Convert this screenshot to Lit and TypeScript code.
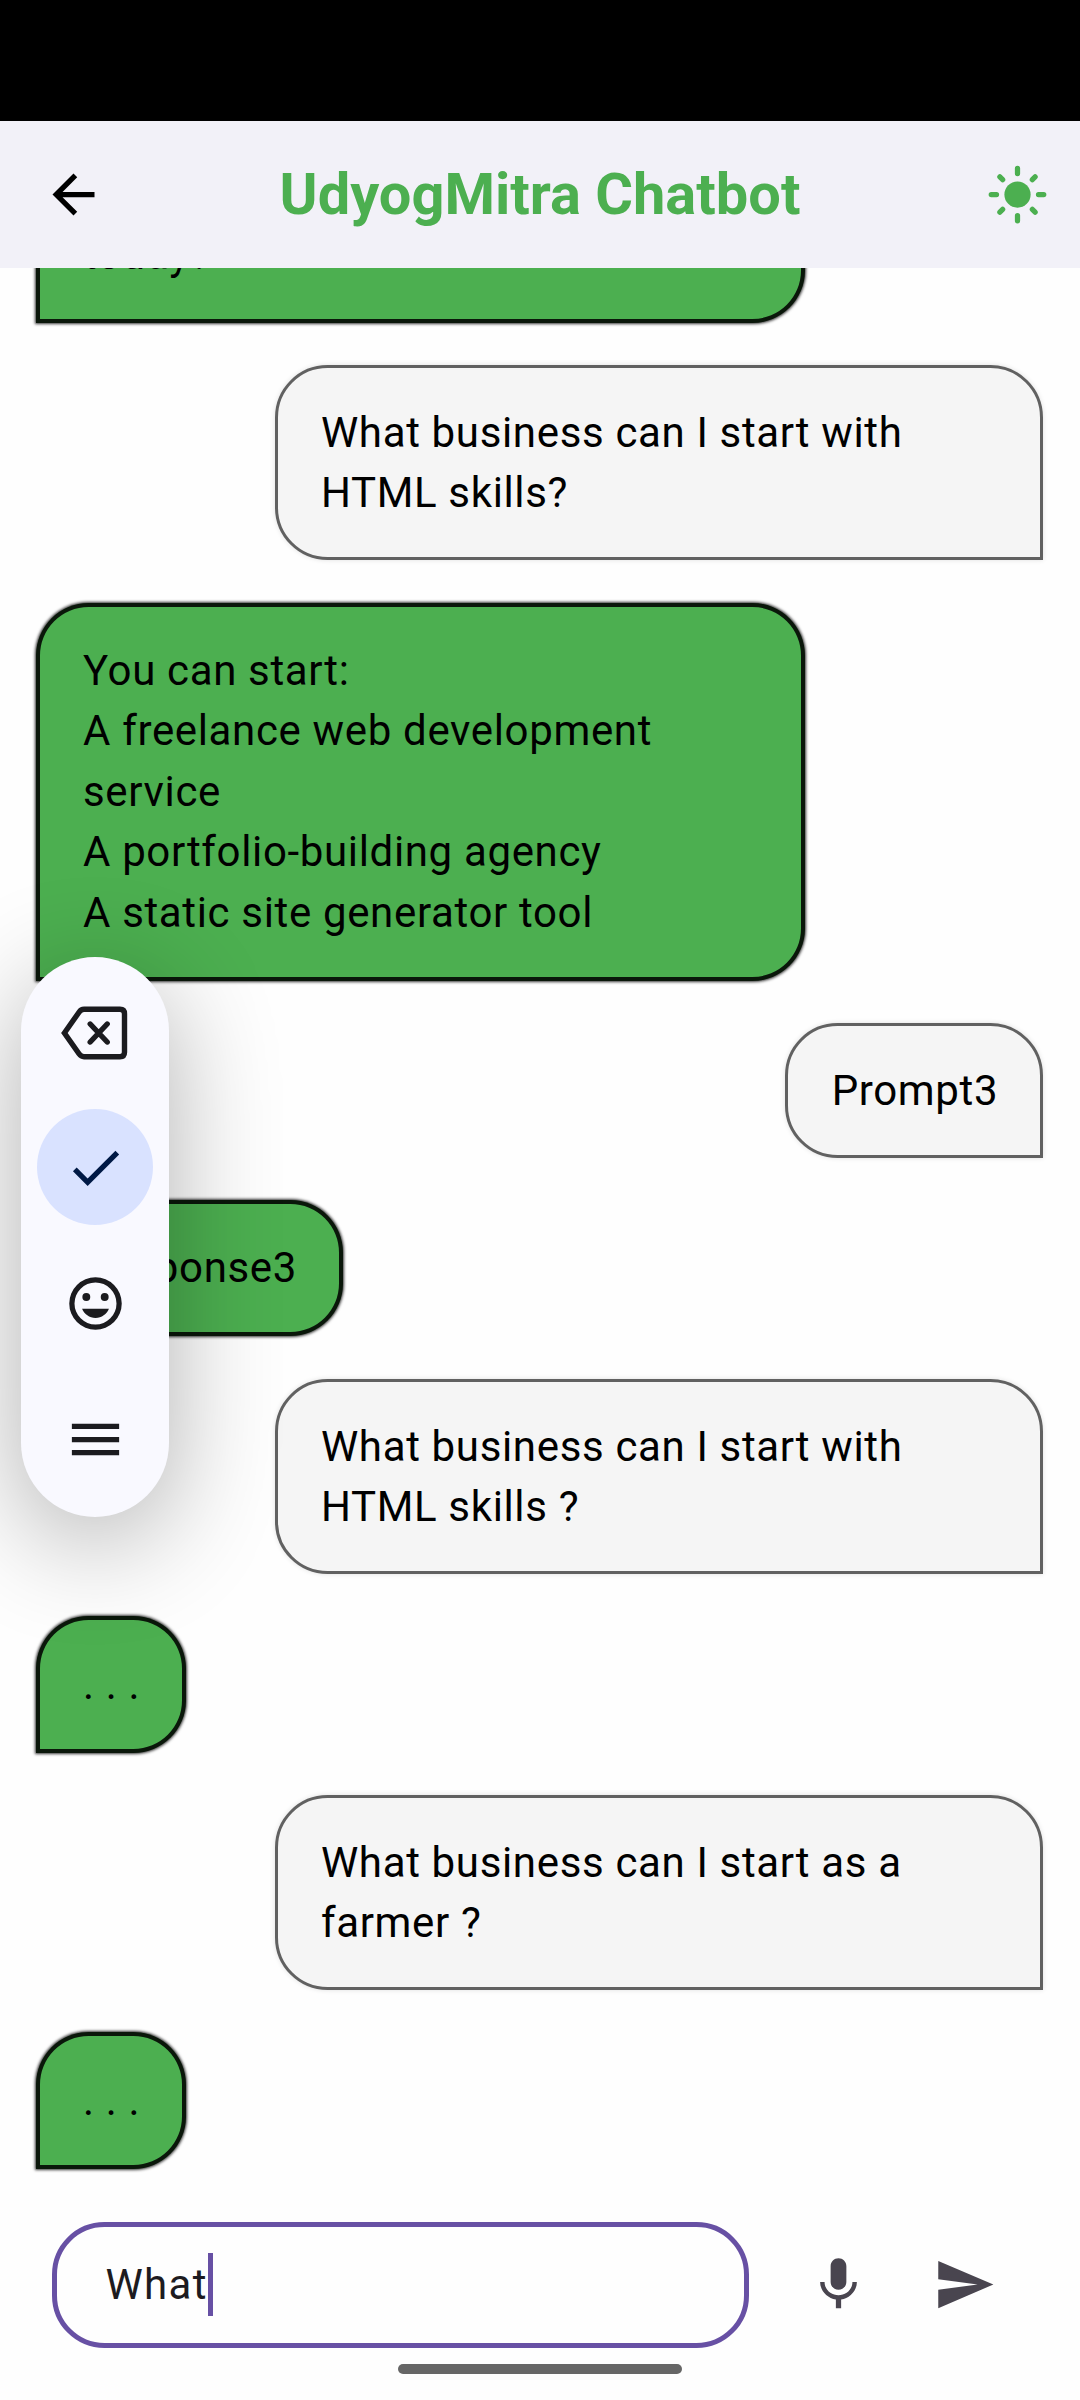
import { LitElement, html, css, svg } from "lit";
import { customElement, property } from "lit/decorators.js";

interface Message {
  from: "user" | "bot";
  lines: string[];
  full?: boolean;
}

const MESSAGES: Message[] = [
  { from: "bot", lines: ["today?"], full: true },
  { from: "user", lines: ["What business can I start with", "HTML skills?"], full: true },
  {
    from: "bot",
    lines: [
      "You can start:",
      "A freelance web development",
      "service",
      "A portfolio-building agency",
      "A static site generator tool",
    ],
    full: true,
  },
  { from: "user", lines: ["Prompt3"] },
  { from: "bot", lines: ["Response3"] },
  { from: "user", lines: ["What business can I start with", "HTML skills ?"], full: true },
  { from: "bot", lines: [". . ."] },
  { from: "user", lines: ["What business can I start as a", "farmer ?"], full: true },
  { from: "bot", lines: [". . ."] },
];

const GLYPHS: Record<string, unknown> = {
  back: svg`<path d="M20 11H7.83l5.59-5.59L12 4l-8 8 8 8 1.41-1.41L7.83 13H20v-2z"/>`,
  sun: svg`<circle cx="12" cy="12" r="5"/>
    <path fill="none" stroke="currentColor" stroke-width="2" stroke-linecap="round"
      d="M2 12h2M20 12h2M12 2v2M12 20v2M5.285 5.285l1.06 1.06M17.655 17.655l1.06 1.06M18.715 5.285l-1.06 1.06M6.345 17.655l-1.06 1.06"/>`,
  check: svg`<path d="M9 16.17L4.83 12l-1.42 1.41L9 19 21 7l-1.41-1.41z"/>`,
  smile: svg`<path fill-rule="evenodd" d="M12 2a10 10 0 1 0 0 20a10 10 0 1 0 0-20zM12 4a8 8 0 1 1 0 16a8 8 0 1 1 0-16z"/>
    <circle cx="8.5" cy="9.5" r="1.5"/><circle cx="15.5" cy="9.5" r="1.5"/>
    <path d="M12 17.5c2.33 0 4.31-1.46 5.11-3.5H6.89c.8 2.04 2.78 3.5 5.11 3.5z"/>`,
  menu: svg`<path d="M3 18h18v-2H3v2zm0-5h18v-2H3v2zm0-7v2h18V6H3z"/>`,
  mic: svg`<path d="M12 14c1.66 0 2.99-1.34 2.99-3L15 5c0-1.66-1.34-3-3-3S9 3.34 9 5v6c0 1.66 1.34 3 3 3zm5.3-3c0 3-2.54 5.1-5.3 5.1S6.7 14 6.7 11H5c0 3.41 2.72 6.23 6 6.72V21h2v-3.28c3.28-.48 6-3.3 6-6.72h-1.7z"/>`,
  send: svg`<path d="M2.01 21L23 12 2.01 3 2 10l15 2-15 2z"/>`,
};

@customElement("ui-icon")
class UiIcon extends LitElement {
  @property() name = "";

  static styles = css`
    :host {
      display: block;
      flex: none;
      width: 63px;
      height: 63px;
    }
    .glyph {
      display: block;
      width: 100%;
      height: 100%;
      fill: currentColor;
      overflow: visible;
    }
  `;

  render() {
    return html`<svg class="glyph" viewBox="0 0 24 24">${GLYPHS[this.name]}</svg>`;
  }
}

@customElement("chat-bubble")
class ChatBubble extends LitElement {
  @property({ attribute: false }) message!: Message;

  static styles = css`
    :host {
      display: flex;
      flex: none;
    }
    .bubble {
      box-sizing: border-box;
      font-size: 42px;
      line-height: 60.375px;
      letter-spacing: 0.656px;
      color: #000;
      white-space: pre;
    }
    .full {
      width: 768.5px;
    }
    .bot {
      margin-right: auto;
      padding: 34.5px 42px 33.7px 43px;
      border: 4px solid rgba(0, 0, 0, 0.87);
      border-radius: 52.5px 52.5px 52.5px 0;
      background: #4caf50;
      box-shadow: 0 0 3px 1px rgba(0, 0, 0, 0.8);
    }
    .user {
      margin-left: auto;
      padding: 34.9px 42px 33.7px 43.2px;
      border: 3px solid #616161;
      border-radius: 52.5px 52.5px 0 52.5px;
      background: #f5f5f5;
      box-shadow: 0 0 5px rgba(0, 0, 0, 0.12);
    }
  `;

  render() {
    const { from, full, lines } = this.message;
    return html`<div class="bubble ${from} ${full ? "full" : ""}">${lines.map((line) => html`<div>${line}</div>`)}</div>`;
  }
}

@customElement("input-toolbar")
class InputToolbar extends LitElement {
  static styles = css`
    :host {
      box-sizing: border-box;
      display: flex;
      flex-direction: column;
      gap: 20px;
      width: 148px;
      height: 559.5px;
      padding: 16px;
      border-radius: 74px;
      background: #f9f9ff;
      color: #1b1b1f;
      box-shadow: 0 24px 110px rgba(0, 0, 0, 0.31);
    }
    .cell {
      display: flex;
      flex: none;
      align-items: center;
      justify-content: center;
      width: 116px;
      height: 116px;
      border-radius: 50%;
    }
    .selected {
      background: #d9e2ff;
      color: #001945;
    }
    .backspace {
      width: 68px;
      height: 54px;
      margin: 4px 2px 0 0;
      fill: none;
      stroke: currentColor;
      stroke-width: 5.4;
    }
  `;

  render() {
    return html`
      <div class="cell">
        <svg class="backspace" viewBox="0 0 68 54">
          <path d="M4.4 27L19 6.2Q21 3.3 24 3.3H60Q64.5 3.3 64.5 7.8V46.2Q64.5 50.7 60 50.7H24Q21 50.7 19 47.8Z" />
          <path stroke-linecap="round" d="M30.2 18L47.2 36M47.2 18L30.2 36" />
        </svg>
      </div>
      <div class="cell selected"><ui-icon name="check"></ui-icon></div>
      <div class="cell"><ui-icon name="smile"></ui-icon></div>
      <div class="cell"><ui-icon name="menu"></ui-icon></div>
    `;
  }
}

@customElement("app-root")
class AppRoot extends LitElement {
  static styles = css`
    :host {
      position: relative;
      display: flex;
      flex-direction: column;
      width: 1080px;
      height: 2400px;
      overflow: hidden;
      background: #fefefe;
      font-family: Roboto, "Liberation Sans", sans-serif;
    }
    .status {
      flex: none;
      height: 121px;
      background: #000;
    }
    .header {
      box-sizing: border-box;
      display: flex;
      flex: none;
      align-items: center;
      justify-content: space-between;
      height: 147px;
      padding: 0 31.5px 0 42px;
      background: #f2f1f8;
    }
    .title {
      padding: 0 10.5px 1px 0;
      font-size: 57.75px;
      font-weight: 700;
      line-height: 73px;
      white-space: nowrap;
      color: #4caf50;
    }
    .sun {
      color: #4caf50;
    }
    .list {
      box-sizing: border-box;
      display: flex;
      flex: 1;
      flex-direction: column;
      justify-content: flex-end;
      gap: 42.2px;
      min-height: 0;
      padding: 0 36.75px 21px 36px;
      overflow: hidden;
    }
    .composer {
      box-sizing: border-box;
      display: flex;
      flex: none;
      align-items: center;
      height: 158px;
      padding: 32px 84px 0 52px;
    }
    .field {
      box-sizing: border-box;
      display: flex;
      align-items: center;
      width: 697px;
      height: 126px;
      padding: 0 0 2px 48.5px;
      border: 5px solid #6750a4;
      border-radius: 52.5px;
      font-size: 42px;
      line-height: 63px;
      letter-spacing: 1.3125px;
      color: #1d1b20;
    }
    .caret {
      width: 5px;
      height: 63px;
      background: #6750a4;
    }
    .actions {
      display: flex;
      flex: 1;
      justify-content: space-between;
      padding: 0 0 1.5px 58px;
      color: #49454f;
    }
    .nav {
      display: flex;
      flex: none;
      justify-content: center;
      height: 52px;
      padding-top: 16px;
      box-sizing: border-box;
    }
    .handle {
      width: 284px;
      height: 10px;
      border-radius: 5px;
      background: #666;
    }
    .floating {
      position: absolute;
      left: 21px;
      top: 957px;
    }
  `;

  render() {
    return html`
      <div class="status"></div>
      <header class="header">
        <ui-icon name="back"></ui-icon>
        <div class="title">UdyogMitra Chatbot</div>
        <ui-icon class="sun" name="sun"></ui-icon>
      </header>
      <main class="list">
        ${MESSAGES.map((m) => html`<chat-bubble .message=${m}></chat-bubble>`)}
      </main>
      <div class="composer">
        <div class="field"><span>What</span><span class="caret"></span></div>
        <div class="actions">
          <ui-icon name="mic"></ui-icon>
          <ui-icon name="send"></ui-icon>
        </div>
      </div>
      <div class="nav"><div class="handle"></div></div>
      <input-toolbar class="floating"></input-toolbar>
    `;
  }
}
